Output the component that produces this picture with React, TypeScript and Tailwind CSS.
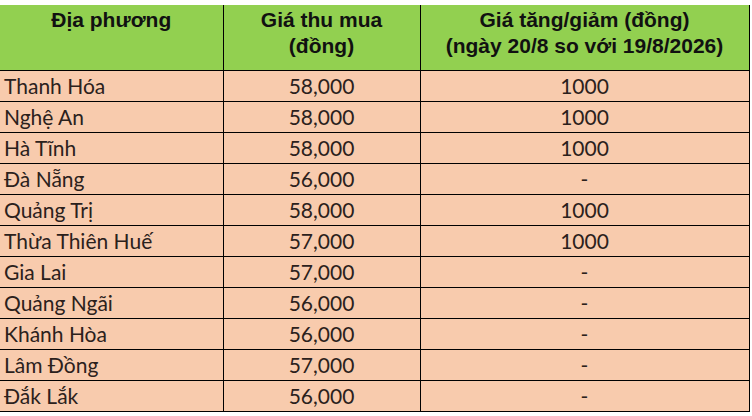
const rows: [string, string, string][] = [
  ['Thanh Hóa', '58,000', '1000'],
  ['Nghệ An', '58,000', '1000'],
  ['Hà Tĩnh', '58,000', '1000'],
  ['Đà Nẵng', '56,000', '-'],
  ['Quảng Trị', '58,000', '1000'],
  ['Thừa Thiên Huế', '57,000', '1000'],
  ['Gia Lai', '57,000', '-'],
  ['Quảng Ngãi', '56,000', '-'],
  ['Khánh Hòa', '56,000', '-'],
  ['Lâm Đồng', '57,000', '-'],
  ['Đắk Lắk', '56,000', '-'],
]

export default function App() {
  return (
    <div className="w-[752px] h-[416px] bg-white pt-[5px]">
      <table className="w-[749px] border-collapse table-fixed">
        <colgroup>
          <col className="w-[223px]" />
          <col className="w-[197px]" />
          <col className="w-[329px]" />
        </colgroup>
        <thead>
          <tr className="h-[65px] bg-[#92d050] text-[#111] font-bold text-[21px] leading-[26px] font-['Liberation_Sans',Arial,sans-serif]">
            <th className="border-b border-r border-black align-top pt-[2px] text-center">Địa phương</th>
            <th className="border-b border-r border-black align-top pt-[2px] text-center">
              Giá thu mua
              <br />
              (đồng)
            </th>
            <th className="border-b border-r border-black align-top pt-[2px] text-center">
              Giá tăng/giảm (đồng)
              <br />
              (ngày 20/8 so với 19/8/2026)
            </th>
          </tr>
        </thead>
        <tbody className="bg-[#f8cbad] text-[#2b211c] text-[21px] font-['Lato',sans-serif]">
          {rows.map(([place, price, diff]) => (
            <tr key={place} className="h-[31px]">
              <td className="border-b border-r border-black pl-[4px] leading-none">{place}</td>
              <td className="border-b border-r border-black text-center leading-none">{price}</td>
              <td className="border-b border-r border-black text-center leading-none">{diff}</td>
            </tr>
          ))}
        </tbody>
      </table>
    </div>
  )
}
